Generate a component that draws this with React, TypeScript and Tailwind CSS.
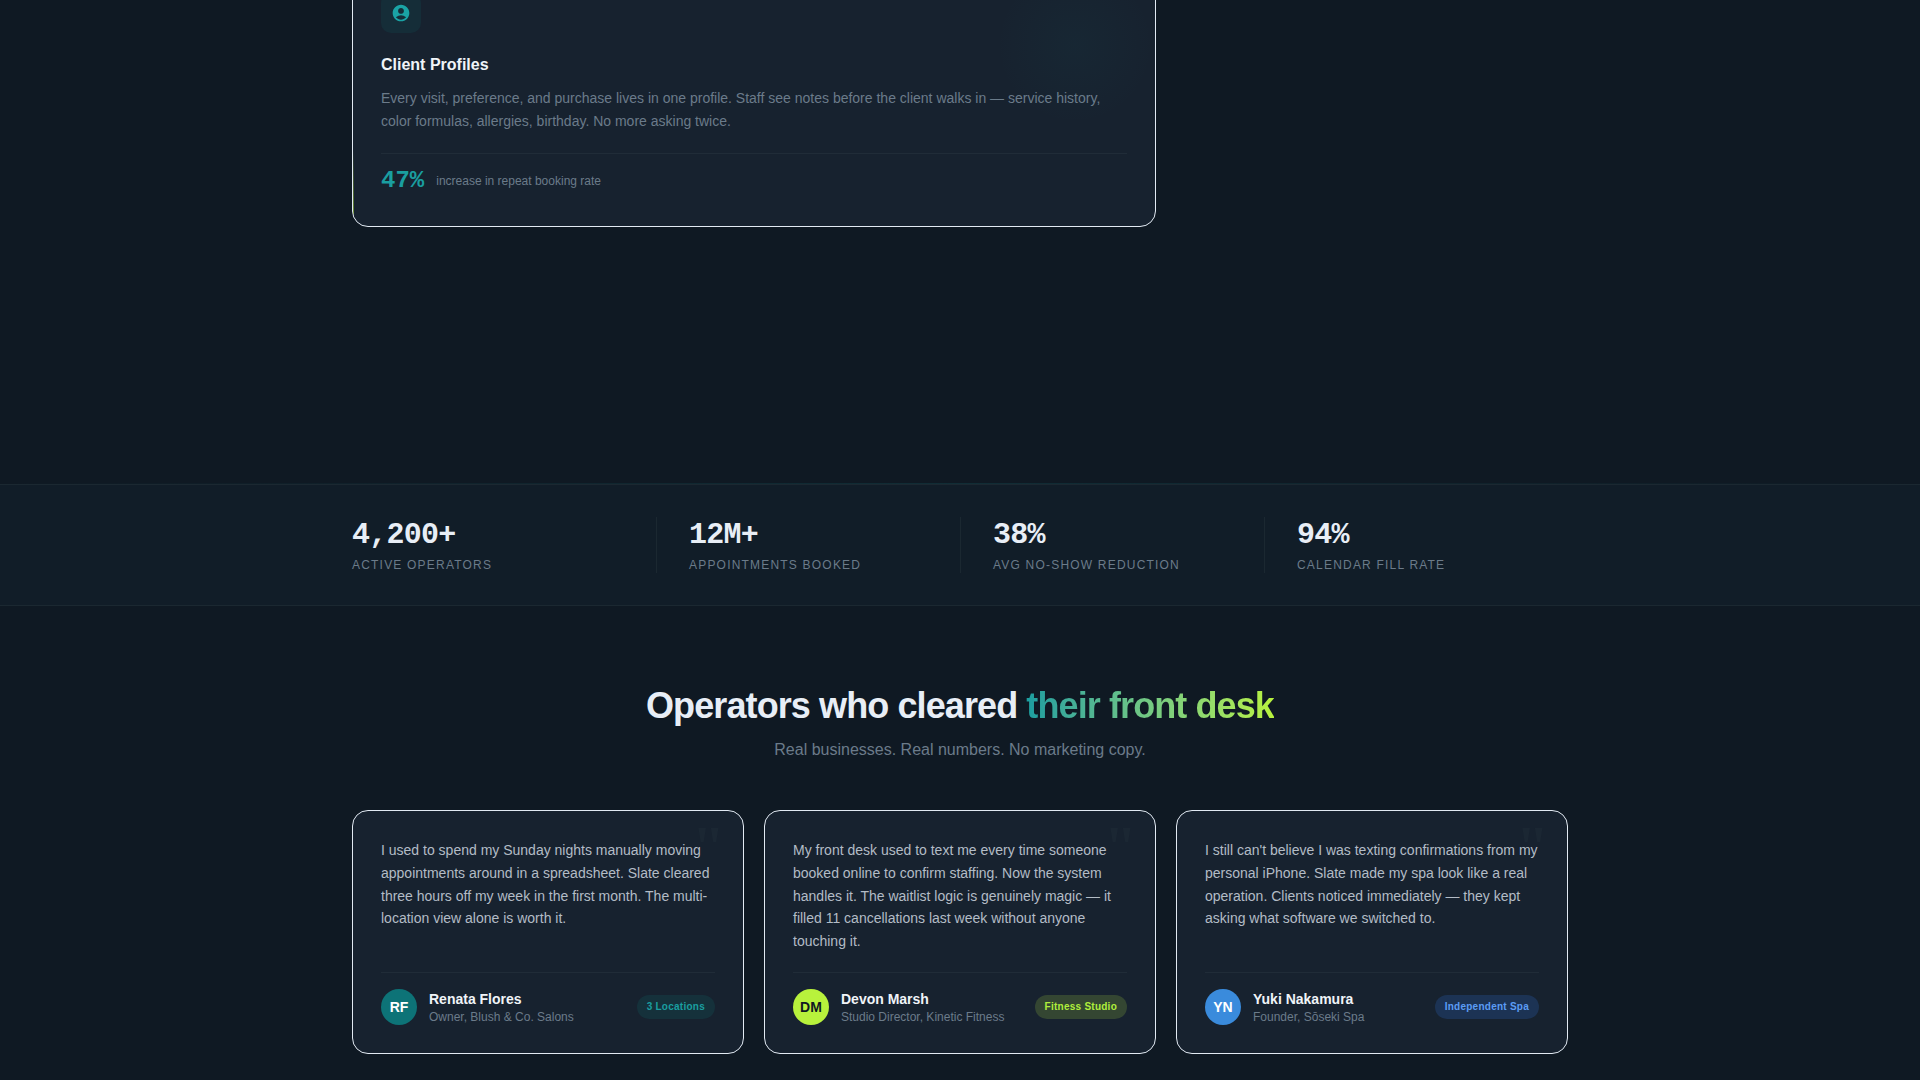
import { MdAccountCircle } from "react-icons/md";

const stats = [
  { value: "4,200+", label: "Active operators" },
  { value: "12M+", label: "Appointments booked" },
  { value: "38%", label: "Avg no-show reduction" },
  { value: "94%", label: "Calendar fill rate" },
];

const testimonials = [
  {
    quote:
      "I used to spend my Sunday nights manually moving appointments around in a spreadsheet. Slate cleared three hours off my week in the first month. The multi-location view alone is worth it.",
    initials: "RF",
    avatar: "bg-[#0d7377] text-white",
    name: "Renata Flores",
    role: "Owner, Blush & Co. Salons",
    tag: "3 Locations",
    tagStyle: "bg-[#15313b] text-[#1a9ea0]",
  },
  {
    quote:
      "My front desk used to text me every time someone booked online to confirm staffing. Now the system handles it. The waitlist logic is genuinely magic — it filled 11 cancellations last week without anyone touching it.",
    initials: "DM",
    avatar: "bg-[#b8f23c] text-[#0f1923]",
    name: "Devon Marsh",
    role: "Studio Director, Kinetic Fitness",
    tag: "Fitness Studio",
    tagStyle: "bg-[#344632] text-[#b0ee3c]",
  },
  {
    quote:
      "I still can't believe I was texting confirmations from my personal iPhone. Slate made my spa look like a real operation. Clients noticed immediately — they kept asking what software we switched to.",
    initials: "YN",
    avatar: "bg-[#3a8bdc] text-white",
    name: "Yuki Nakamura",
    role: "Founder, Sōseki Spa",
    tag: "Independent Spa",
    tagStyle: "bg-[#1c3354] text-[#5b9cf5]",
  },
];

function FeatureCard() {
  return (
    <article className="relative col-span-2 overflow-hidden rounded-2xl border border-[#e2eaf3] bg-[#17222f] px-7 pt-7 pb-[31px]">
      <div className="absolute top-0 right-0 h-40 w-40 bg-radial from-[#1a9ea0]/4 to-transparent to-70%" />
      <div className="absolute bottom-3 left-0 h-16 w-px bg-linear-to-b from-transparent to-[#b8f23c]/50" />
      <div className="flex size-10 items-center justify-center rounded-[10px] bg-[#152d38]">
        <MdAccountCircle className="size-5 text-[#1aa3a5]" />
      </div>
      <h3 className="mt-5 text-base font-bold text-[#f0f4f8]">Client Profiles</h3>
      <p className="mt-2.5 text-sm leading-[23px] text-[#6b7b8a]">
        Every visit, preference, and purchase lives in one profile. Staff see notes before the client walks in —
        service history, color formulas, allergies, birthday. No more asking twice.
      </p>
      <div className="mt-5 flex items-center gap-3 border-t border-[#202c38] pt-[13px]">
        <span className="font-['Liberation_Mono',monospace] text-2xl leading-7 font-bold text-[#1a9ea0]">47%</span>
        <span className="text-xs text-[#6b7b8a]">increase in repeat booking rate</span>
      </div>
    </article>
  );
}

function StatsBar() {
  return (
    <section className="relative border-y border-[#1b2831] bg-[#111d28] py-8">
      <div className="absolute inset-x-0 -top-0.5 h-px bg-linear-to-r from-transparent via-[#1a9ea0]/15 to-transparent" />
      <dl className="mx-auto grid max-w-[1216px] grid-cols-4">
        {stats.map((s) => (
          <div
            key={s.label}
            className="flex flex-col-reverse border-l border-[#1b2831] pl-8 first:border-l-0 first:pl-0"
          >
            <dt className="mt-1 text-xs leading-4 tracking-widest text-[#6b7b8a] uppercase">{s.label}</dt>
            <dd className="font-['Liberation_Mono',monospace] text-3xl leading-9 font-bold tracking-tight text-[#e8eef6]">
              {s.value}
            </dd>
          </div>
        ))}
      </dl>
    </section>
  );
}

function Testimonial({ item }: { item: (typeof testimonials)[number] }) {
  return (
    <figure className="relative flex flex-col rounded-2xl border border-[#e2eaf3] bg-[#17222f] p-7">
      <span
        aria-hidden="true"
        className="absolute top-1.5 right-4.5 font-['Liberation_Serif',serif] text-6xl leading-none font-bold text-[#1b2733]"
      >
        "
      </span>
      <blockquote className="relative mb-[19px] grow text-sm leading-relaxed text-[#b3bcc6]">{item.quote}</blockquote>
      <figcaption className="flex items-center gap-3 border-t border-[#202c38] pt-4">
        <span
          className={`flex size-9 shrink-0 items-center justify-center rounded-full text-sm font-bold ${item.avatar}`}
        >
          {item.initials}
        </span>
        <span className="grow">
          <span className="block text-sm font-bold text-[#f0f4f8]">{item.name}</span>
          <span className="block text-xs leading-4 text-[#6b7b8a]">{item.role}</span>
        </span>
        <span className={`rounded-full px-2.5 py-1 text-[10px] leading-4 font-bold tracking-wide ${item.tagStyle}`}>
          {item.tag}
        </span>
      </figcaption>
    </figure>
  );
}

export default function App() {
  return (
    <div className="min-h-screen overflow-hidden bg-[#0f1923] font-['Liberation_Sans',Arial,sans-serif]">
      <section className="mx-auto -mt-9 grid max-w-[1216px] grid-cols-3 gap-5 pb-[257px]">
        <FeatureCard />
      </section>
      <StatsBar />
      <section className="mx-auto max-w-[1216px] pt-20 pb-6">
        <h2 className="text-center text-4xl leading-10 font-bold tracking-tight text-[#e8eef6]">
          Operators who cleared{" "}
          <span className="bg-linear-to-r from-[#1a9ea0] to-[#b8f23c] bg-clip-text text-transparent">
            their front desk
          </span>
        </h2>
        <p className="mt-3 text-center text-base text-[#6b7b8a]">Real businesses. Real numbers. No marketing copy.</p>
        <div className="mt-12 grid grid-cols-3 gap-5">
          {testimonials.map((t) => (
            <Testimonial key={t.name} item={t} />
          ))}
        </div>
      </section>
    </div>
  );
}
